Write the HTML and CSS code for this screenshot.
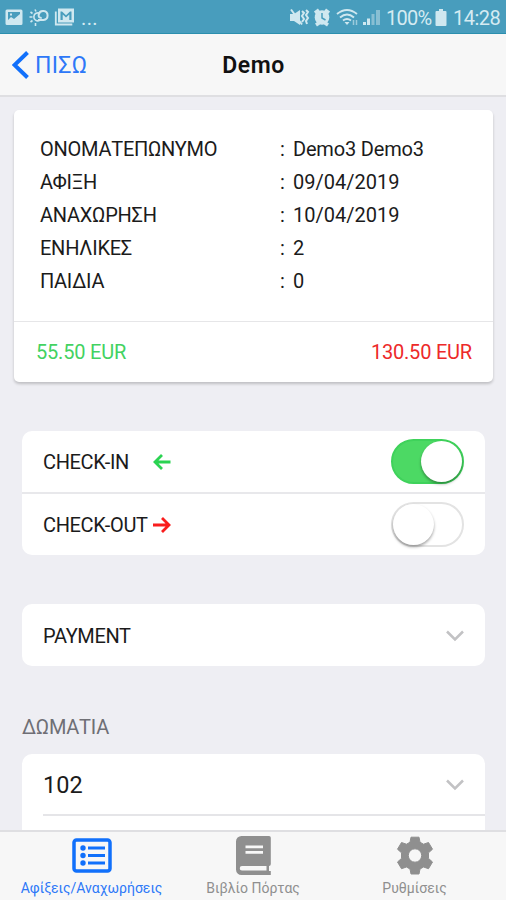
FILE: index.html
```html
<!DOCTYPE html>
<html lang="el">
<head>
<meta charset="utf-8">
<title>Demo</title>
<link rel="stylesheet" href="styles.css">
</head>
<body>
<div class="status">
  <svg class="s-left" width="76" height="20" viewBox="0 0 76 20" fill="none">
    <path fill="#cfe8f0" fill-rule="evenodd" d="M2 1.500h14a1.500 1.500 0 0 1 1.500 1.500v12.500a1.500 1.500 0 0 1-1.500 1.500h-14a1.500 1.500 0 0 1-1.500-1.500v-12.500a1.500 1.500 0 0 1 1.500-1.500zM3 4v8l3-3 3 2 6-5v-2zM5 5.500h2v2h-2z"/>
    <g stroke="#cfe8f0" stroke-width="1.600"><path d="M34.500 12.500a4 4 0 1 1 .5-7M30 1.500l1 2M25.500 4l2 1.500M24.500 9h3M25.500 14l2-1.500M30.500 15v3"/></g><path stroke="#cfe8f0" stroke-width="2" d="M33 12h5.500a4.500 4.500 0 1 0-4.800-5.500c-.5 2.500 .6 3.500 3 3.500"/>
    <path fill="#cfe8f0" fill-rule="evenodd" d="M53 .5h16v14h-16zM55.500 3.500v8.500h2.200v-5.500l3.300 3 3.300-3v5.500h2.200v-8.500h-1.500l-4 3.700-4-3.700z"/>
    <path stroke="#cfe8f0" stroke-width="1.800" d="M50.800 3.500v13h16.500"/>
  </svg>
  <span class="dots">...</span>
  <svg class="s-right" width="92" height="20" viewBox="0 0 92 20" fill="none">
    <path fill="#cfe8f0" d="M1 6h4l6-4v15l-6-4h-4z"/><path stroke="#cfe8f0" stroke-width="2" d="M2 1.500l11 15M13 3l2 2-2 3 2 3-2 3M17 2l2 2-2 3 2 3-2 3 1 3"/>
    <circle cx="33" cy="9.500" r="7.300" fill="#cfe8f0"/><path stroke="#cfe8f0" stroke-width="3.500" d="M26 5l4-3M40 5l-4-3M27 17l3-2M39 17l-3-2"/><path stroke="#489dbd" stroke-width="1.500" d="M33 5v5l3.500 2"/>
    <g stroke="#cfe8f0" stroke-width="1.900"><path d="M48 6q10-8 20 0M51 9.500q7-6 14 0M54 12.500q4-3 8 0"/></g><path fill="#cfe8f0" d="M55.500 14h5l-2.500 3z"/><path stroke="#9bcbdc" stroke-width="1.500" d="M64.500 12v5M67.500 12v5"/>
    <path fill="#cfe8f0" d="M74 14h3v3h-3zM78 10.500h3v6.500h-3z"/><path fill="#88bfd3" d="M82.500 6h3v11h-3zM87 2h4v15h-4z"/>
  </svg>
  <span class="pct">100%</span>
  <svg class="bat" width="12" height="18" viewBox="0 0 12 18"><path fill="#cfe8f0" d="M4 0h4v2h2.500a1 1 0 0 1 1 1v13a1 1 0 0 1-1 1h-9a1 1 0 0 1-1-1v-13a1 1 0 0 1 1-1h2.500z"/></svg>
  <span class="time">14:28</span>
</div>
<header class="nav">
  <a class="back"><svg width="17" height="28" viewBox="0 0 17 28" fill="none" stroke="#1170fb" stroke-width="4"><path d="M15.500 1.500L2.500 14l13 12.500"/></svg><span>ΠΙΣΩ</span></a>
  <h1>Demo</h1>
</header>
<main class="content">
  <section class="card">
    <dl class="details">
      <dt>ΟΝΟΜΑΤΕΠΩΝΥΜΟ</dt><dd><i>:</i><span class="name">Demo3 Demo3</span></dd>
      <dt>ΑΦΙΞΗ</dt><dd><i>:</i><span>09/04/2019</span></dd>
      <dt>ΑΝΑΧΩΡΗΣΗ</dt><dd><i>:</i><span>10/04/2019</span></dd>
      <dt>ΕΝΗΛΙΚΕΣ</dt><dd><i>:</i><span>2</span></dd>
      <dt>ΠΑΙΔΙΑ</dt><dd><i>:</i><span>0</span></dd>
    </dl>
    <div class="totals"><span class="paid">55.50 EUR</span><span class="due">130.50 EUR</span></div>
  </section>
  <section class="list checks">
    <div class="row line"><span class="label cin">CHECK-IN</span><svg class="arrow" width="18" height="16" viewBox="0 0 18 16" fill="none" stroke="#2bd352" stroke-width="2.800"><path d="M17.500 8H2M9 1L2 8l7 7"/></svg><span class="toggle on"></span></div>
    <div class="row"><span class="label cout">CHECK-OUT</span><svg class="arrow" width="18" height="16" viewBox="0 0 18 16" fill="none" stroke="#f91d1d" stroke-width="2.800"><path d="M0 8h16M9 1l7 7-7 7"/></svg><span class="toggle"></span></div>
  </section>
  <section class="list payment">
    <div class="row"><span class="label">PAYMENT</span><svg class="chev" width="18" height="12" viewBox="0 0 18 12" fill="none" stroke="#c2c2c4" stroke-width="2.500"><path d="M1 1.500l8 8 8-8"/></svg></div>
  </section>
  <h2>ΔΩΜΑΤΙΑ</h2>
  <section class="list rooms">
    <div class="row"><span class="num">102</span><svg class="chev" width="18" height="12" viewBox="0 0 18 12" fill="none" stroke="#c2c2c4" stroke-width="2.500"><path d="M1 1.500l8 8 8-8"/></svg></div>
    <div class="inset"></div>
  </section>
</main>
<nav class="tabs">
  <a class="tab active"><svg width="40" height="40" viewBox="0 0 40 40"><rect x="2" y="4" width="36" height="31" rx="2.500" fill="none" stroke="#1170fb" stroke-width="3.500"/><g fill="#1170fb"><circle cx="11" cy="12" r="2.700"/><circle cx="11" cy="19.500" r="2.700"/><circle cx="11" cy="27" r="2.700"/><path d="M16 10.500h17v3h-17zM16 18h17v3h-17zM16 25.500h17v3h-17z"/></g></svg><span>Αφίξεις/Αναχωρήσεις</span></a>
  <a class="tab"><svg width="40" height="40" viewBox="0 0 40 40"><path fill="#8f8f8f" d="M8.500 0h27.500a1.800 1.800 0 0 1 1.800 1.800v26.200a2 2 0 0 1-1.800 2v5h1.800v4h-29.300a5.500 5.500 0 0 1-5.500-5.500v-28a5.500 5.500 0 0 1 5.500-5.500z"/><path fill="#f7f7f7" d="M12.500 9.500h17.500v2.700h-17.500zM12.500 15h17.500v2.700h-17.500zM9 30h24.500v4.500h-24.500a2.200 2.200 0 0 1 0-4.500z"/></svg><span>Βιβλίο Πόρτας</span></a>
  <a class="tab"><svg width="40" height="40" viewBox="0 0 40 40"><path fill="#8f8f8f" stroke="#8f8f8f" stroke-linejoin="round" fill-rule="evenodd" d="M16 1.200h8l1 5 3.500 2 5-1.700 4 6.700-4 3.600v5.600l4 3.600-4 6.700-5-1.700-3.500 2-1 5h-8l-1-5-3.500-2-5 1.700-4-6.700 4-3.600v-5.600l-4-3.600 4-6.700 5 1.700 3.500-2zM20 12.800a6.700 6.700 0 1 0 0 13.400a6.700 6.700 0 0 0 0-13.400z"/></svg><span>Ρυθμίσεις</span></a>
</nav>
</body>
</html>
```
FILE: styles.css
```css
* { box-sizing: border-box; margin: 0; }
body { width: 506px; height: 900px; overflow: hidden; display: flex; flex-direction: column; background: #eeeef3; font-family: Roboto, "Liberation Sans", sans-serif; color: #1b1b1b; white-space: nowrap; }
svg { display: block; flex: none; }
.status { height: 34px; flex: none; background: #489dbd; border-bottom: 1px solid #2b8fae; display: flex; align-items: center; padding: 3px 6px 0 5px; color: #d5ebf2; font-size: 20px; }
.dots { letter-spacing: .4px; }
.s-right { margin-left: auto; margin-right: 5px; }
.pct { width: 45px; font-size: 20px; letter-spacing: -.7px; }
.bat { margin: 0 6px 0 4px; }
.time { width: 47px; font-size: 20px; letter-spacing: -.5px; }
.nav { height: 63px; flex: none; background: #f7f7f7; border-bottom: 2px solid #dfdfe2; display: grid; grid-template-columns: 1fr auto 1fr; align-items: center; padding-top: 1px; }
.back { display: flex; align-items: center; gap: 6px; padding-left: 12px; color: #2d78f8; font-size: 23px; letter-spacing: .3px; }
h1 { font-size: 23px; font-weight: 600; letter-spacing: .5px; padding-left: 1px; color: #111; }
.content { flex: 1; min-height: 0; overflow: hidden; padding-top: 13px; }
.card { margin: 0 13px 0 14px; height: 272px; background: #fff; border-radius: 5px; box-shadow: 0 2px 3px rgba(0,0,0,.2); font-size: 20px; }
.details { height: 212px; padding: 23px 26px 0; display: grid; grid-template-columns: 240px 1fr; grid-auto-rows: 33px; line-height: 33px; border-bottom: 1px solid #e6e6e8; }
dt { letter-spacing: -.25px; }
.name { letter-spacing: -.18px; }
dd { display: flex; }
dd i { width: 13px; font-style: normal; }
.totals { height: 60px; display: flex; justify-content: space-between; align-items: center; padding: 0 21px 0 22px; letter-spacing: -.2px; }
.paid { color: #43d261; }
.due { color: #ed2929; }
.list { margin: 0 21px 0 22px; background: #fff; border-radius: 10px; overflow: hidden; }
.checks { margin-top: 49px; }
.row { height: 62px; padding: 0 21px; display: flex; align-items: center; font-size: 20px; }
.checks .row { height: 61px; }
.checks .line { height: 63px; border-bottom: 2px solid #e8e8eb; }
.label { letter-spacing: -.35px; padding-top: 1px; }
.cin, .cout { width: 110px; }
.cout { padding-top: 0; }
.toggle { margin-left: auto; width: 73px; height: 45px; border-radius: 23px; border: 2px solid #e3e3e3; background: #fff; display: flex; }
.toggle::before { content: ""; width: 41px; height: 41px; border-radius: 50%; background: #fff; box-shadow: 0 2px 3px rgba(0,0,0,.35); }
.toggle.on { background: #4cd964; border-color: #3fd25b; justify-content: flex-end; }
.payment { margin-top: 49px; }
.chev { margin-left: auto; margin-top: 1px; }
h2 { height: 88px; padding: 48px 22px 0; font-size: 20px; line-height: 26px; font-weight: 400; letter-spacing: -.25px; color: #6f6f75; }
.num { font-size: 23.500px; padding-top: 1px; }
.rooms { height: 90px; border-radius: 10px 10px 0 0; }
.rooms .row { height: 60px; }
.inset { height: 2px; margin-left: 21px; background: #e5e5e8; }
.tabs { height: 70px; flex: none; background: #f7f7f7; border-top: 2px solid #dfdfe2; display: grid; grid-template-columns: repeat(3, 161.500px); justify-content: center; }
.tab { display: flex; flex-direction: column; align-items: center; padding-top: 4px; color: #8f8f8f; font-size: 14px; line-height: 24px; }
.active { color: #2d78f8; }
```
